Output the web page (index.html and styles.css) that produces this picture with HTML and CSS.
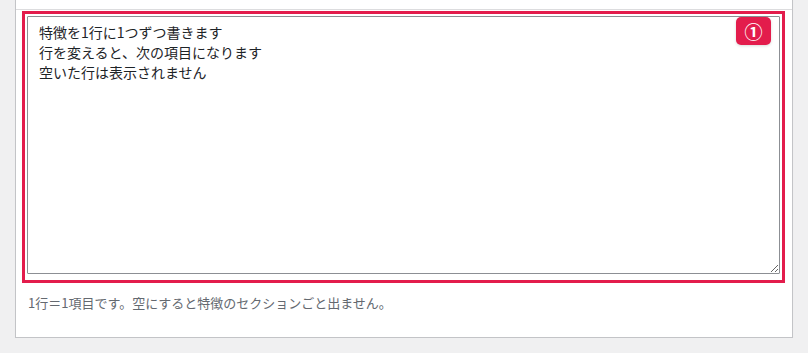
FILE: index.html
```html
<!DOCTYPE html>
<html lang="ja">
<head>
    <meta charset="UTF-8">
    <meta name="viewport" content="width=device-width, initial-scale=1.0">
    <title>特徴の設定</title>
    <link rel="stylesheet" href="styles.css">
</head>
<body>
    <div class="panel">
        <div class="panel-top"></div>
        <div class="field">
            <div class="field-box">
                <textarea class="field-input" id="features">特徴を1行に1つずつ書きます
行を変えると、次の項目になります
空いた行は表示されません</textarea>
                <span class="badge">①</span>
            </div>
            <p class="help">1行＝1項目です。空にすると特徴のセクションごと出ません。</p>
        </div>
    </div>
</body>
</html>
```

FILE: styles.css
```css
body {
    margin: 0;
    background-color: #f0f0f1;
    font-family: "Noto Sans CJK JP", "Noto Sans", sans-serif;
    color: #2c3338;
}

.panel {
    margin: -1px 0 0 15px;
    width: 776px;
    background: #fff;
    border: 1px solid #c3c4c7;
    box-shadow: 0 1px 1px rgba(0, 0, 0, 0.04);
}

.panel-top {
    height: 9px;
    border-bottom: 1px solid #dcdcde;
}

.field {
    padding: 1px 7px 24px 6px;
}

/* highlighted field with its number */
.field-box {
    position: relative;
    border: 3px solid #e31c4c;
    padding: 2px 2px 6px 2px;
}

.field-input {
    display: block;
    box-sizing: border-box;
    width: 100%;
    height: 258px;
    margin: 0;
    padding: 5px 11px;
    border: 1px solid #8c8f94;
    border-radius: 1px;
    font-family: inherit;
    font-size: 14px;
    line-height: 20px;
    color: #1d2327;
    background: #fff;
    resize: vertical;
}

.badge {
    position: absolute;
    top: 3px;
    right: 11px;
    width: 35px;
    height: 28px;
    display: flex;
    align-items: center;
    justify-content: center;
    background: #e31c4c;
    color: #fff;
    border-radius: 5px;
    font-size: 18px;
    font-weight: bold;
    box-shadow: 0 1px 3px rgba(0, 0, 0, 0.15);
}

.help {
    margin: 10px 0 0 0;
    padding-left: 6px;
    font-size: 13px;
    line-height: 20px;
    color: #646970;
}
```
